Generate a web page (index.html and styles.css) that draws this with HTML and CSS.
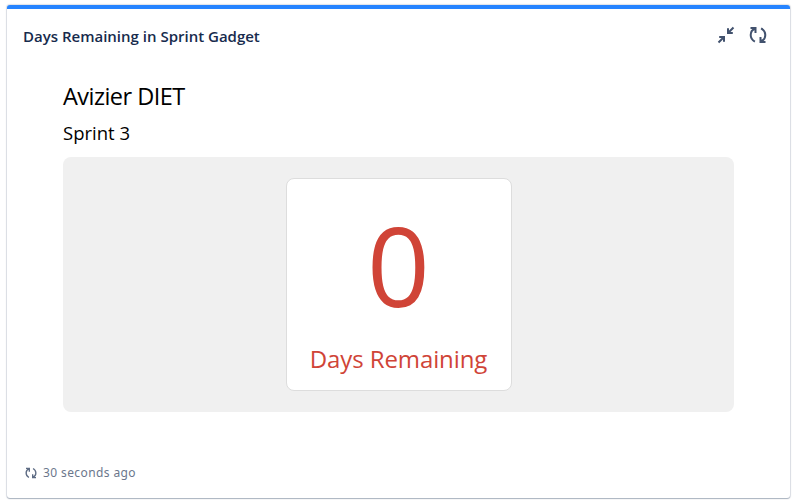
FILE: index.html
```html
<!DOCTYPE html>
<html lang="en">
<head>
<meta charset="utf-8">
<title>Days Remaining in Sprint Gadget</title>
<link rel="stylesheet" href="styles.css">
</head>
<body>
<svg class="defs" width="0" height="0" aria-hidden="true">
  <symbol id="refresh" viewBox="0 0 18 18">
    <path d="M1.500 2H6.500V7M6.300 2.500C3.300 3.600 1.700 6.400 1.700 9c0 2.900 1.500 5.200 4.200 6.700M16.500 16H11.500V11M11.700 15.500C14.700 14.400 16.300 11.600 16.300 9c0-2.900-1.500-5.200-4.200-6.700"/>
  </symbol>
</svg>
<main class="gadget">
  <header class="header">
    <h1 class="title">Days Remaining in Sprint Gadget</h1>
    <div class="actions">
      <svg class="icon" viewBox="0 0 18 18"><path d="M16.500 1.500 11.500 6.500M11 2.200V7h4.800M1.500 16.500l5-5M2.200 11H7v4.800"/></svg>
      <svg class="icon"><use href="#refresh"/></svg>
    </div>
  </header>
  <section class="content">
    <h2 class="board">Avizier DIET</h2>
    <h3 class="sprint">Sprint 3</h3>
    <div class="panel">
      <div class="card">
        <div class="count">0</div>
        <div class="label">Days Remaining</div>
      </div>
    </div>
  </section>
  <footer class="footer"><svg class="small-icon"><use href="#refresh"/></svg><span>30 seconds ago</span></footer>
</main>
</body>
</html>
```
FILE: styles.css
```css
* { box-sizing: border-box; }
body {
  min-height: 504px;
  margin: 0;
  padding: 5px 7px 0;
  background: #fff;
  font-family: "Open Sans", "Noto Sans", sans-serif;
}
.defs { display: none; }
h1, h2, h3 { margin: 0; font-weight: 400; }
.gadget {
  display: flex;
  flex-direction: column;
  width: 783px;
  height: 493px;
  border-top: 4px solid #2684ff;
  border-radius: 3px;
  background: #fff;
  box-shadow: 0 1px 1px rgba(9, 30, 66, .25), 0 0 1px 1px rgba(9, 30, 66, .13);
}
.header {
  display: flex;
  justify-content: space-between;
  height: 64px;
  padding: 17px 23px 0 16px;
}
.title {
  height: 19px;
  overflow: hidden;
  color: #172b4d;
  font-size: 15px;
  font-weight: 600;
  line-height: 20px;
  white-space: nowrap;
}
.actions { display: flex; gap: 14px; }
.icon, .small-icon { fill: none; stroke: #42526e; stroke-width: 2; }
.icon { width: 18px; height: 18px; }
.content { padding: 0 56px; color: #000; }
.board { height: 44px; font-size: 23.5px; line-height: 46px; letter-spacing: -.53px; }
.sprint { height: 40px; font-size: 18.5px; line-height: 32px; }
.panel {
  display: flex;
  justify-content: center;
  height: 255px;
  padding-top: 21px;
  border-radius: 8px;
  background: #f0f0f0;
}
.card {
  width: 226px;
  height: 213px;
  border: 1px solid #ddd;
  border-radius: 8px;
  background: #fff;
  color: #d04437;
  text-align: center;
}
.count { height: 160px; font-size: 110px; line-height: 170px; }
.label { font-size: 24px; line-height: 40px; letter-spacing: -.1px; white-space: nowrap; }
.footer {
  display: flex;
  align-items: center;
  gap: 6px;
  height: 20px;
  margin: 51px 0 0 18px;
  color: #6b778c;
  font: 12px/20px "Noto Sans", sans-serif;
  letter-spacing: .4px;
}
.small-icon { width: 12px; height: 12px; stroke: #5e6c84; }
```
